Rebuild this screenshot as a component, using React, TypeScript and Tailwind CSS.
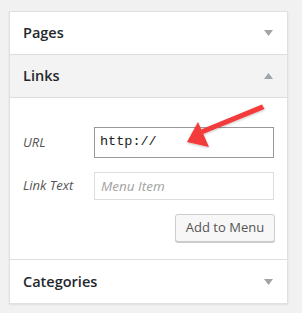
const font = { fontFamily: '"Open Sans", "Liberation Sans", sans-serif' };

function Caret({ up }: { up?: boolean }) {
  return (
    <svg width="9" height="6" viewBox="0 0 9 6" className="mr-[14px]">
      <path d={up ? "M0 6 L4.5 0 L9 6 Z" : "M0 0 L9 0 L4.5 6 Z"} fill="#a0a5aa" />
    </svg>
  );
}

function Header({ title, up, shaded, last }: { title: string; up?: boolean; shaded?: boolean; last?: boolean }) {
  return (
    <div
      className={`flex h-[43px] items-center justify-between pl-[13px] ${last ? "" : "border-b border-[#dedede]"} ${shaded ? "bg-[#f3f3f3]" : "bg-white"}`}
    >
      <span className="text-[14.5px] font-semibold text-[#23282d]">{title}</span>
      <Caret up={up} />
    </div>
  );
}

export default function App() {
  return (
    <div className="relative h-[313px] w-[302px] bg-[#f1f1f1] pt-[11px] pl-[9px]" style={font}>
      <div className="w-[279px] border border-[#e0e0e0] bg-white shadow-[0_1px_2px_rgba(0,0,0,0.08)]">
        <Header title="Pages" />
        <Header title="Links" up shaded />
        <div className="border-b border-[#dedede] pt-[29px] pr-[12px] pb-[17px] pl-[13px]">
          <div className="flex items-center">
            <span className="w-[71px] text-[13px] italic text-[#555]">URL</span>
            <div className="flex h-[31px] w-[180px] items-center border border-[#999] px-[5px] text-[13.5px] text-[#222]" style={{ fontFamily: '"Liberation Mono", monospace' }}>
              http://
            </div>
          </div>
          <div className="mt-[14px] flex items-center">
            <span className="w-[71px] text-[13px] italic text-[#555]">Link Text</span>
            <div className="flex h-[28px] w-[180px] items-center border border-[#ddd] px-[6px] text-[13.5px] italic text-[#a2a2a2]">
              Menu Item
            </div>
          </div>
          <div className="mt-[14px] flex justify-end">
            <button className="h-[28px] w-[100px] rounded-[3px] border border-[#ccc] bg-[#f7f7f7] text-[13px] text-[#555] shadow-[0_1px_0_#ccc]">
              Add to Menu
            </button>
          </div>
        </div>
        <Header title="Categories" last />
      </div>
      <svg className="pointer-events-none absolute left-0 top-0" width="302" height="313">
        <defs>
          <filter id="sh" x="-20%" y="-20%" width="140%" height="140%">
            <feDropShadow dx="0" dy="1" stdDeviation="1" floodColor="#000" floodOpacity="0.25" />
          </filter>
        </defs>
        <g filter="url(#sh)" fill="#f33b3b">
          <path d="M262 104.5 L264.5 109 L203 134 L201 129.5 Z" />
          <path d="M187 142 L198 122 L209 147 Z" />
        </g>
      </svg>
    </div>
  );
}
